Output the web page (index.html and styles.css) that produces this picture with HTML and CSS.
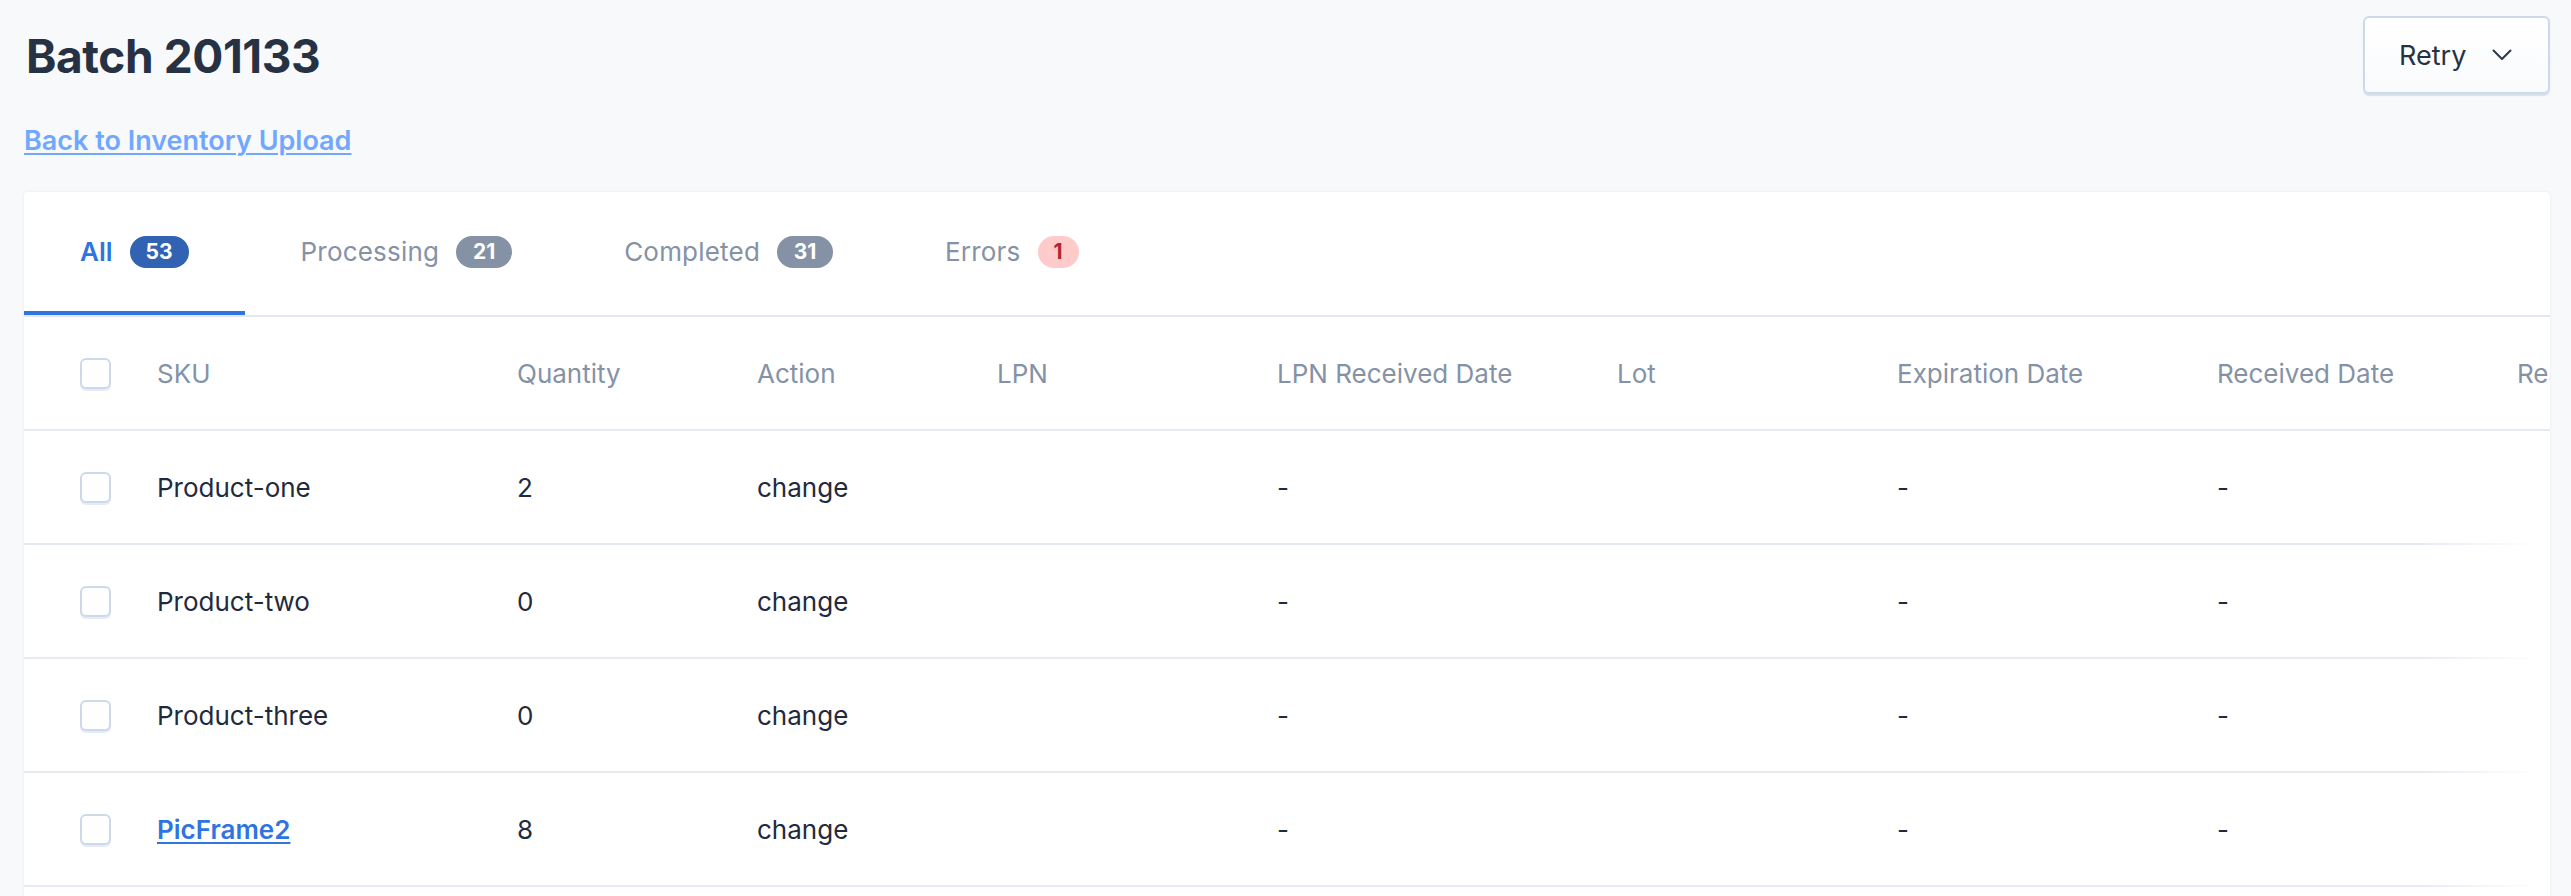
FILE: index.html
```html
<!DOCTYPE html>
<html lang="en">
  <head>
    <meta charset="UTF-8" />
    <meta name="viewport" content="width=device-width, initial-scale=1.0" />
    <title>Batch 201133</title>
    <link rel="stylesheet" href="styles.css">
  </head>
  <body>
    <div class="page">
      <div class="page-header">
        <div class="heading">
          <h1>Batch 201133</h1>
          <a class="back-link" href="#">Back to Inventory Upload</a>
        </div>
        <button class="retry-btn" type="button">
          <span>Retry</span>
          <svg width="20" height="12" viewBox="0 0 20 12" fill="none">
            <path d="M1.5 1.5L10 10L18.5 1.5" stroke="#2d3748" stroke-width="2" stroke-linecap="round" stroke-linejoin="round" />
          </svg>
        </button>
      </div>

      <div class="card">
        <div class="tabs">
          <a class="tab active" href="#">All <span class="badge badge-blue">53</span></a>
          <a class="tab" href="#">Processing <span class="badge badge-gray">21</span></a>
          <a class="tab" href="#">Completed <span class="badge badge-gray">31</span></a>
          <a class="tab" href="#">Errors <span class="badge badge-red">1</span></a>
        </div>

        <div class="table-wrap">
          <table class="items">
            <colgroup>
              <col class="c-check" />
              <col class="c-sku" />
              <col class="c-qty" />
              <col class="c-action" />
              <col class="c-lpn" />
              <col class="c-lpn-date" />
              <col class="c-lot" />
              <col class="c-exp" />
              <col class="c-received" />
              <col class="c-reason" />
            </colgroup>
            <thead>
              <tr>
                <th class="check-cell"><span class="checkbox"></span></th>
                <th>SKU</th>
                <th>Quantity</th>
                <th>Action</th>
                <th>LPN</th>
                <th>LPN Received Date</th>
                <th>Lot</th>
                <th>Expiration Date</th>
                <th>Received Date</th>
                <th>Reason</th>
              </tr>
            </thead>
            <tbody>
              <tr>
                <td class="check-cell"><span class="checkbox"></span></td>
                <td>Product-one</td>
                <td>2</td>
                <td>change</td>
                <td></td>
                <td>-</td>
                <td></td>
                <td>-</td>
                <td>-</td>
                <td></td>
              </tr>
              <tr>
                <td class="check-cell"><span class="checkbox"></span></td>
                <td>Product-two</td>
                <td>0</td>
                <td>change</td>
                <td></td>
                <td>-</td>
                <td></td>
                <td>-</td>
                <td>-</td>
                <td></td>
              </tr>
              <tr>
                <td class="check-cell"><span class="checkbox"></span></td>
                <td>Product-three</td>
                <td>0</td>
                <td>change</td>
                <td></td>
                <td>-</td>
                <td></td>
                <td>-</td>
                <td>-</td>
                <td></td>
              </tr>
              <tr>
                <td class="check-cell"><span class="checkbox"></span></td>
                <td><a class="sku-link" href="#">PicFrame2</a></td>
                <td>8</td>
                <td>change</td>
                <td></td>
                <td>-</td>
                <td></td>
                <td>-</td>
                <td>-</td>
                <td></td>
              </tr>
            </tbody>
          </table>
          <div class="scroll-fade"></div>
        </div>
      </div>
    </div>
  </body>
</html>
```

FILE: styles.css
```css
body {
  margin: 0;
  background: #f8f9fb;
  color: #1f2b3d;
  font-family: "Inter", "Noto Sans", sans-serif;
  font-size: 26px;
  overflow: hidden;
}

.page {
  padding: 16px 21px 0 24px;
}

.page-header {
  display: flex;
  justify-content: space-between;
  align-items: flex-start;
  height: 176px;
}

h1 {
  margin: 12px 0 0 2px;
  font-size: 46px;
  line-height: 56px;
  font-weight: 700;
  color: #263244;
  letter-spacing: -0.4px;
}

.back-link {
  display: inline-block;
  margin-top: 40px;
  font-size: 27px;
  font-weight: 600;
  color: #70a8ff;
  text-decoration: underline;
  text-underline-offset: 3px;
  text-decoration-thickness: 2px;
}

.retry-btn {
  display: flex;
  align-items: center;
  gap: 26px;
  width: 187px;
  height: 78px;
  padding: 0 0 0 34px;
  background: linear-gradient(#ffffff, #fafbfd);
  border: 2px solid #cdd8ea;
  border-radius: 6px;
  box-shadow: 0 2px 1px rgba(160, 180, 210, 0.35);
  font-family: inherit;
  font-size: 27px;
  color: #263244;
  cursor: pointer;
}

.card {
  min-height: 760px;
  background: #fff;
  border-radius: 4px 4px 0 0;
  box-shadow: 0 0 3px rgba(30, 50, 90, 0.08);
  overflow: hidden;
}

.tabs {
  display: flex;
  height: 123px;
  border-bottom: 2px solid #e3e8f0;
}

.tab {
  display: flex;
  align-items: center;
  gap: 17px;
  padding: 0 56px;
  font-size: 26px;
  letter-spacing: 0.2px;
  color: #8592a6;
  text-decoration: none;
  border-bottom: 4px solid transparent;
}

.tab.active {
  color: #2f74e0;
  font-weight: 600;
  letter-spacing: 0;
  border-bottom-color: #2f74e0;
}

.badge {
  display: inline-flex;
  align-items: center;
  justify-content: center;
  height: 32px;
  min-width: 41px;
  padding: 0 10px;
  box-sizing: border-box;
  border-radius: 16px;
  font-size: 21px;
  font-weight: 700;
  letter-spacing: 0;
  color: #fff;
}

.badge-blue {
  background: #3163b2;
  min-width: 59px;
}

.badge-gray {
  background: #8592a6;
  min-width: 56px;
}

.badge-red {
  background: #fecaca;
  color: #b3262b;
}

.table-wrap {
  position: relative;
  overflow: hidden;
}

.items {
  table-layout: fixed;
  border-collapse: collapse;
  width: 2826px;
}

.c-check { width: 133px; }
.c-sku { width: 360px; }
.c-qty { width: 240px; }
.c-action { width: 240px; }
.c-lpn { width: 280px; }
.c-lpn-date { width: 340px; }
.c-lot { width: 280px; }
.c-exp { width: 320px; }
.c-received { width: 300px; }
.c-reason { width: 333px; }

.items th,
.items td {
  height: 112px;
  padding: 0;
  text-align: left;
  white-space: nowrap;
  border-bottom: 2px solid #e6ebf3;
}

.items th {
  font-weight: 400;
  color: #8592a6;
}

.items td {
  color: #1f2b3d;
}

.check-cell {
  padding-left: 56px !important;
}

.checkbox {
  display: block;
  width: 31px;
  height: 31px;
  box-sizing: border-box;
  border: 2px solid #cdd8ea;
  border-radius: 6px;
  background: #fff;
  box-shadow: 0 2px 0 #e6ecf5;
}

.sku-link {
  color: #2f74e0;
  font-weight: 600;
  text-decoration: underline;
  text-underline-offset: 3px;
  text-decoration-thickness: 2px;
}

.scroll-fade {
  position: absolute;
  top: 114px;
  right: 0;
  bottom: 0;
  width: 130px;
  background: linear-gradient(to right, rgba(255, 255, 255, 0), #fff 90%);
}
```
